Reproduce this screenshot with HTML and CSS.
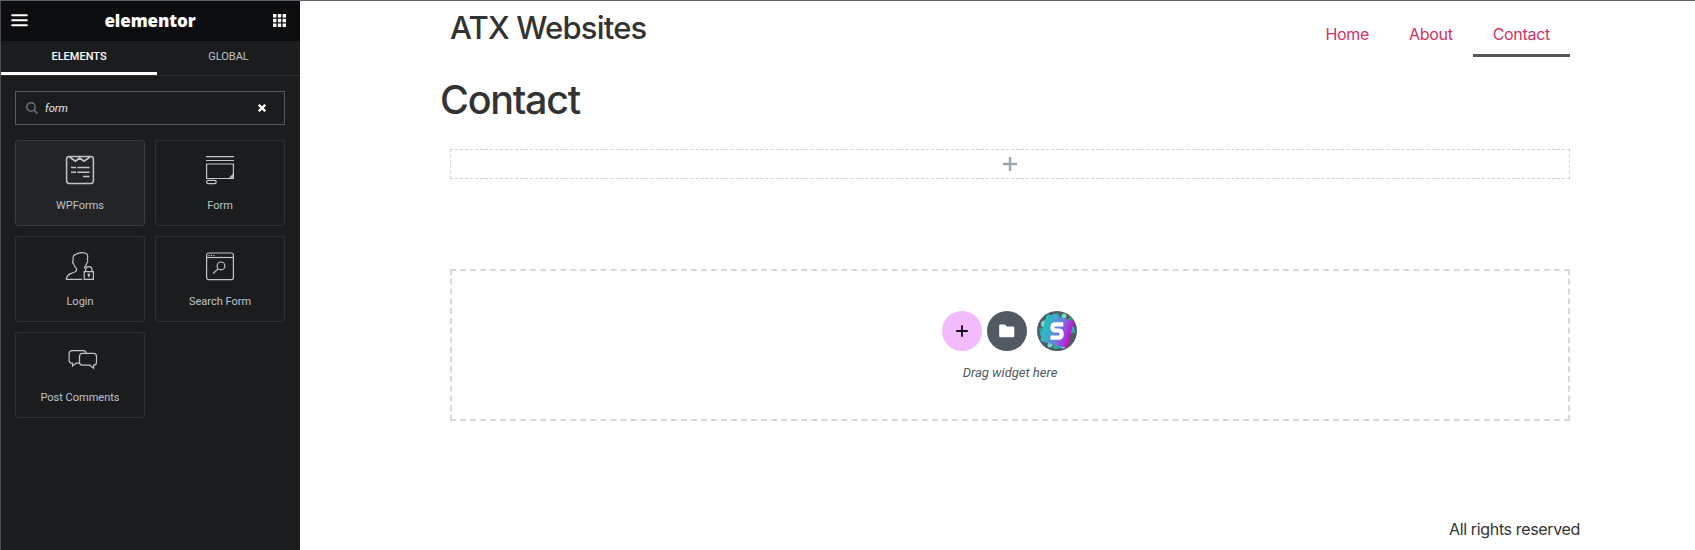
FILE: index.html
```html
<!DOCTYPE html>
<html lang="en">
<head>
<meta charset="utf-8">
<title>Elementor - Contact</title>
<link rel="stylesheet" href="styles.css">
</head>
<body>
<div class="editor">
  <aside class="panel">
    <header class="panel-header">
      <svg class="menu-icon" width="17" height="13" viewBox="0 0 17 13"><path d="M1.2 1.2h14.6M1.2 6.2h14.6M1.2 11.2h14.6" stroke="#fff" stroke-width="2" stroke-linecap="round"/></svg>
      <span class="brand">elementor</span>
      <svg class="grid-icon" width="13" height="13" viewBox="0 0 13 13" fill="#fff"><path d="M0 0h3.4v3.4H0zM4.8 0h3.4v3.4H4.8zM9.6 0H13v3.4H9.6zM0 4.8h3.4v3.4H0zM4.8 4.8h3.4v3.4H4.8zM9.6 4.8H13v3.4H9.6zM0 9.6h3.4V13H0zM4.8 9.6h3.4V13H4.8zM9.6 9.6H13V13H9.6z"/></svg>
    </header>
    <nav class="tabs">
      <span class="tab tab-active">ELEMENTS</span>
      <span class="tab">GLOBAL</span>
    </nav>
    <div class="search">
      <svg width="12" height="12" viewBox="0 0 12 12" fill="none" stroke="#69727d" stroke-width="1.5"><circle cx="5" cy="5" r="4.2"/><path d="M8.2 8.2l3.2 3.2"/></svg>
      <span class="search-text">form</span>
      <svg width="8" height="8" viewBox="0 0 8 8" stroke="#fff" stroke-width="2.3"><path d="M.8.8l6.4 6.4M7.2.8L.8 7.2"/></svg>
    </div>
    <div class="widgets">
      <div class="widget widget-hover">
        <svg width="30" height="30" viewBox="0 0 30 30" fill="none" stroke="#bfc5cc"><rect x="1.6" y="1.6" width="26.8" height="26.8" rx="2.6" stroke-width="1.5"/><path d="M4.5 2l6 4.2 4.2-3.2 4.3 3.2 6-4.2" stroke-width="1.8"/><path d="M6 12.5h5M12.3 12.5h12.2M6 17.2h5M12.3 17.2h12.2M18 21.5h6.5" stroke-width="1.6"/></svg>
        <span>WPForms</span>
      </div>
      <div class="widget">
        <svg width="30" height="30" viewBox="0 0 30 30" fill="none" stroke="#bfc5cc" stroke-width="1.2"><path d="M1 1.7h28M1 5.5h28"/><path d="M1.6 9h26.8v14.5H1.6z"/><path d="M24.7 23l3.5-3.6M26.5 23l1.7-1.7"/><rect x="1.6" y="25.4" width="9.6" height="3.2" rx="1.6"/></svg>
        <span>Form</span>
      </div>
      <div class="widget">
        <svg width="30" height="30" viewBox="0 0 30 30" fill="none" stroke="#bfc5cc" stroke-width="1.2"><path d="M17.2 28.3H1.4c.1-3.2 1.6-4.600 4.200-5.700 2.400-1 4.600-1.300 5.500-2.400.7-1.100.4-2.500-.2-3.500-1.200-.9-1.900-2.100-2.100-3.700-.9-.5-1.300-1.700-1.100-2.700.1-.7.6-1 .5-1.600-.5-3.500.5-5.200 3.400-5.500 1.500-1.900 8.300-2.300 10.500 0 1.100 1.500.5 3.500.3 5.500.7.9.2 2.800-.8 3.700-.2 1.700-1.200 3-2.100 3.900v1.300"/><path d="M19.200 20.600h9.200v7.700h-9.200z"/><path d="M20.600 20.400v-1.500a3.200 3.200 0 0 1 6.400 0v1.500"/><circle cx="23.800" cy="23.700" r=".7"/><path d="M23.800 24v2.300"/></svg>
        <span>Login</span>
      </div>
      <div class="widget">
        <svg width="30" height="30" viewBox="0 0 30 30" fill="none" stroke="#bfc5cc" stroke-width="1.2"><rect x="1.600" y="2" width="26.800" height="26.600" rx="2"/><path d="M1.600 6.500h26.800"/><path d="M3.500 4.400h1.200M5.900 4.400h1.200M8.300 4.400h1.200"/><circle cx="16" cy="14.900" r="3.900"/><path d="M13.200 17.700l-5.200 4.900"/></svg>
        <span>Search Form</span>
      </div>
      <div class="widget">
        <svg class="shift" width="30" height="30" viewBox="0 0 30 30" fill="none" stroke="#bfc5cc" stroke-width="1.200"><path d="M12 16.200H8.600L5 19.100v-2.900c-2.300 0-3.400-.9-3.400-3V6.700c0-2.200 1-3 3-3h11.200c1.700 0 2.600.8 2.800 2.500"/><path d="M15 6.400h11c2 0 3 1 3 3v5.800c0 2-1 3-2.900 3v3.100l-3.800-3.100H15c-2 0-3-1-3-3V9.400c0-2 1-3 3-3z"/></svg>
        <span>Post Comments</span>
      </div>
    </div>
  </aside>
  <main class="preview">
    <header class="site-header">
      <span class="site-name">ATX Websites</span>
      <nav class="site-nav"><a>Home</a><a>About</a><a class="current">Contact</a></nav>
    </header>
    <h1 class="page-title">Contact</h1>
    <div class="add-row"><svg width="14" height="14" viewBox="0 0 14 14" stroke="#9da5ae" stroke-width="2.400"><path d="M7 0v14M0 7h14"/></svg></div>
    <section class="drop-area">
      <div class="actions">
        <span class="action add"><svg width="12" height="12" viewBox="0 0 12 12" stroke="#0c0d0e" stroke-width="1.800" stroke-linecap="round"><path d="M6 .9v10.200M.9 6h10.200"/></svg></span>
        <span class="action folder"><svg width="16" height="14" viewBox="0 0 16 14" fill="#fff"><path d="M1.500.5h4.300l2 2h6.200c.8 0 1.300.5 1.300 1.300v8.200c0 .8-.5 1.300-1.300 1.300H1.500C.7 13.300.2 12.800.2 12V1.800C.2 1 .7.500 1.500.500z"/></svg></span>
        <span class="action kit"><svg width="40" height="40" viewBox="0 0 40 40">
          <defs><linearGradient id="kit-fill" x1="0" y1=".4" x2="1" y2=".5"><stop offset="0" stop-color="#1cc4bc"/><stop offset=".5" stop-color="#6688e0"/><stop offset=".85" stop-color="#a53cda"/><stop offset="1" stop-color="#c80fc8"/></linearGradient><clipPath id="round"><circle cx="20" cy="20" r="20"/></clipPath></defs>
          <g clip-path="url(#round)">
            <g fill="#25a583"><circle cx="4.500" cy="19" r="2.500"/><circle cx="7" cy="28" r="3"/><circle cx="19" cy="35.500" r="3"/><circle cx="33" cy="9" r="2.500"/><circle cx="36" cy="20" r="2.500"/><circle cx="20" cy="4.500" r="2.500"/></g>
            <g fill="#6fd9cb"><circle cx="7.500" cy="13" r="3.500"/><circle cx="13" cy="34" r="2.500"/><circle cx="26" cy="35" r="2.500"/><circle cx="27" cy="5" r="2.500"/></g>
            <rect x="7" y="7" width="26" height="26" rx="2" fill="#3fa6c6" transform="rotate(35 20 20)"/>
            <rect x="6" y="6" width="28" height="28" rx="2.500" fill="url(#kit-fill)" transform="rotate(14 20 20)"/>
          </g>
          <path d="M26.300 11.300v4.200h-8.100c-1.100 0-1.100 1.900 0 1.900h4.300c5.800 0 5.800 11.300 0 11.300h-9v-4.200h8.200c1.200 0 1.200-2.900 0-2.900h-4.200c-5.600 0-5.400-10.300 0-10.300z" fill="#fff"/></svg></span>
      </div>
      <span class="hint">Drag widget here</span>
    </section>
    <footer class="site-footer">All rights reserved</footer>
  </main>
</div>
</body>
</html>
```
FILE: styles.css
```css
* { box-sizing: border-box; }
body { margin: 0; background: #fff; }
.editor { display: flex; height: 550px; border-top: 1px solid #5f6065; overflow: hidden; }
.panel { width: 300px; flex: none; background: #1b1c1e; border-left: 1px solid #4a4b4e; font-family: Roboto, sans-serif; color: #bfc5cc; }
.panel-header { height: 40px; background: #0c0d0e; display: flex; align-items: center; justify-content: space-between; padding: 0 14px 2px 10px; }
.brand { color: #fff; font: 800 17px/1 "Open Sans", sans-serif; padding-right: 1px; letter-spacing: -0.100px; }
.tabs { display: flex; height: 35px; border-bottom: 1px solid #2f3135; }
.tab { flex: 1; text-align: center; font-size: 11px; font-weight: 450; line-height: 31px; height: 34px; }
.tab-active { flex: none; width: 156px; color: #fff; font-weight: 500; border-bottom: 3px solid #fff; }
.search { margin: 15px 15px 15px 14px; height: 34px; border: 1px solid #515962; display: flex; align-items: center; padding: 0 18px 0 10px; }
.search-text { flex: 1; margin-left: 7px; font-size: 11px; font-style: italic; color: #e6e9ec; }
.widgets { display: grid; grid-template-columns: 130px 130px; grid-auto-rows: 86px; gap: 10px; padding-left: 14px; }
.widget { border: 1px solid #2f3034; border-radius: 3px; display: flex; flex-direction: column; align-items: center; padding-top: 14px; font-size: 11px; line-height: 13px; font-weight: 450; gap: 14px; }
.widget-hover { background: #232426; border-color: #3a3c43; }
.shift { transform: translateX(2.5px); }
.preview { flex: 1; font-family: Inter, sans-serif; color: #333; padding-left: 150px; }
.site-header { display: flex; justify-content: space-between; width: 1120px; height: 56px; }
.site-name { font-size: 31px; font-weight: 500; line-height: 38px; padding-top: 8px; letter-spacing: -0.800px; }
.site-nav { display: flex; color: #cc3366; font-size: 16px; line-height: 24px; letter-spacing: -0.300px; }
.site-nav a { padding: 21px 20px 8px; }
.site-nav .current { border-bottom: 3px solid #55595c; }
.page-title { margin: 19px 0 0 -10px; font-size: 39.500px; font-weight: 500; line-height: 48px; height: 73px; letter-spacing: -1.300px; }
.add-row { width: 1120px; height: 30px; border: 1px dashed #d0d2d5; display: flex; align-items: center; justify-content: center; }
.drop-area { width: 1120px; height: 152px; margin-top: 90px; border: 2px dashed #d5d8dc; display: flex; flex-direction: column; align-items: center; padding-top: 40px; }
.actions { display: flex; gap: 5px; height: 40px; margin-right: 2px; }
.action { width: 40px; height: 40px; border-radius: 50%; background: #515962; display: flex; align-items: center; justify-content: center; }
.action.add { background: #f3bafd; }
.action.folder { padding-left: 1px; }
.kit { margin-left: 5px; }
.hint { margin-top: 14px; font: italic 450 13px/16px Roboto, sans-serif; color: #515962; }
.site-footer { margin-top: 96px; width: 1130px; text-align: right; font-size: 16px; line-height: 24px; letter-spacing: -0.350px; }
```
